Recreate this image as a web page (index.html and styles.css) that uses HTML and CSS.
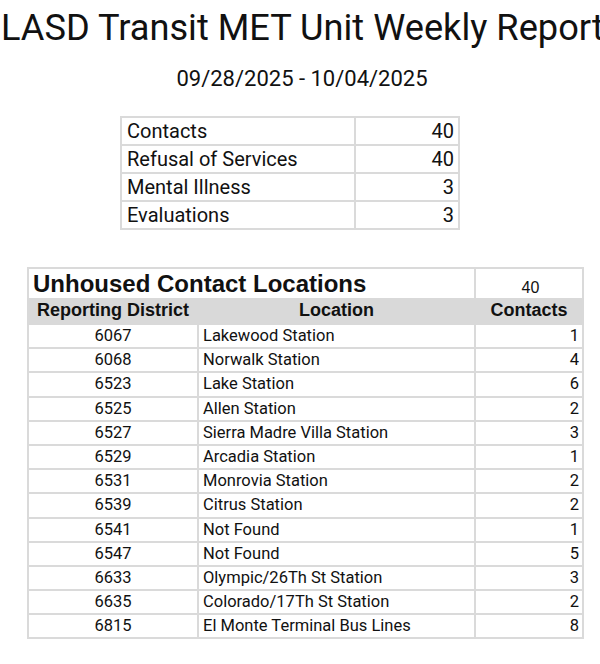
FILE: index.html
```html
<!DOCTYPE html>
<html lang="en">
<head>
<meta charset="utf-8">
<title>LASD Transit MET Unit Weekly Report</title>
<link rel="stylesheet" href="styles.css">
</head>
<body>
<div class="page">
  <h1 class="title">LASD Transit MET Unit Weekly Report</h1>
  <div class="dates">09/28/2025 - 10/04/2025</div>

  <table class="summary">
    <colgroup><col class="s-label"><col class="s-val"></colgroup>
    <tr><td>Contacts</td><td class="num">40</td></tr>
    <tr><td>Refusal of Services</td><td class="num">40</td></tr>
    <tr><td>Mental Illness</td><td class="num">3</td></tr>
    <tr><td>Evaluations</td><td class="num">3</td></tr>
  </table>

  <table class="locations">
    <colgroup><col class="c-rd"><col class="c-loc"><col class="c-cnt"></colgroup>
    <tr class="caption-row">
      <td colspan="2" class="caption">Unhoused Contact Locations</td>
      <td class="total">40</td>
    </tr>
    <tr class="head">
      <th>Reporting District</th>
      <th>Location</th>
      <th>Contacts</th>
    </tr>
    <tr><td class="rd">6067</td><td>Lakewood Station</td><td class="num">1</td></tr>
    <tr><td class="rd">6068</td><td>Norwalk Station</td><td class="num">4</td></tr>
    <tr><td class="rd">6523</td><td>Lake Station</td><td class="num">6</td></tr>
    <tr><td class="rd">6525</td><td>Allen Station</td><td class="num">2</td></tr>
    <tr><td class="rd">6527</td><td>Sierra Madre Villa Station</td><td class="num">3</td></tr>
    <tr><td class="rd">6529</td><td>Arcadia Station</td><td class="num">1</td></tr>
    <tr><td class="rd">6531</td><td>Monrovia Station</td><td class="num">2</td></tr>
    <tr><td class="rd">6539</td><td>Citrus Station</td><td class="num">2</td></tr>
    <tr><td class="rd">6541</td><td>Not Found</td><td class="num">1</td></tr>
    <tr><td class="rd">6547</td><td>Not Found</td><td class="num">5</td></tr>
    <tr><td class="rd">6633</td><td>Olympic/26Th St Station</td><td class="num">3</td></tr>
    <tr><td class="rd">6635</td><td>Colorado/17Th St Station</td><td class="num">2</td></tr>
    <tr><td class="rd">6815</td><td>El Monte Terminal Bus Lines</td><td class="num">8</td></tr>
  </table>
</div>
</body>
</html>
```

FILE: styles.css
```css
html, body {
  margin: 0;
  padding: 0;
  background: #ffffff;
}

.page {
  width: 600px;
  height: 664px;
  overflow: hidden;
  color: #111111;
  font-family: Roboto, "Liberation Sans", sans-serif;
}

.title {
  margin: 0;
  padding: 6px 0 0 1px;
  font-size: 36.2px;
  font-weight: 400;
  line-height: 44px;
  white-space: nowrap;
}

.dates {
  margin-top: 16px;
  text-align: center;
  padding-left: 4px;
  font-size: 22px;
  line-height: 26px;
}

table {
  border-collapse: collapse;
  table-layout: fixed;
}

td, th {
  border: 2px solid #dadada;
  padding: 0;
}

.summary {
  margin: 24px 0 0 120px;
  width: 338px;
  font-size: 20px;
}

.summary .s-label { width: 234px; }
.summary .s-val { width: 104px; }

.summary td {
  height: 26px;
  padding: 0 4px 0 5px;
  line-height: 26px;
}

.summary .num { text-align: right; }

.locations {
  margin: 37px 0 0 27px;
  width: 555px;
  font-size: 16.5px;
}

.locations .c-rd { width: 170px; }
.locations .c-loc { width: 277px; }
.locations .c-cnt { width: 108px; }

.locations td {
  height: 22.2px;
  line-height: 22px;
  padding: 0 3px 0 4px;
  white-space: nowrap;
}

.caption-row td {
  height: 29px;
  border-bottom: none;
}

.caption {
  font-family: "Liberation Sans", Arial, sans-serif;
  font-weight: 700;
  font-size: 24px;
  line-height: 29px;
  padding-left: 4px;
}

.locations .total {
  text-align: center;
  vertical-align: bottom;
  line-height: 20px;
  font-family: "Liberation Sans", Arial, sans-serif;
  font-size: 16px;
  padding-left: 6px;
}

.head th {
  background: #d9d9d9;
  border-color: #d9d9d9;
  border-top: none;
  font-family: "Liberation Sans", Arial, sans-serif;
  font-weight: 700;
  font-size: 18px;
  height: 25px;
  line-height: 25px;
  padding: 0;
  text-align: center;
  color: #111111;
}

.locations .rd {
  text-align: center;
  padding-left: 0;
  padding-right: 0;
}

.locations .num { text-align: right; }
```
